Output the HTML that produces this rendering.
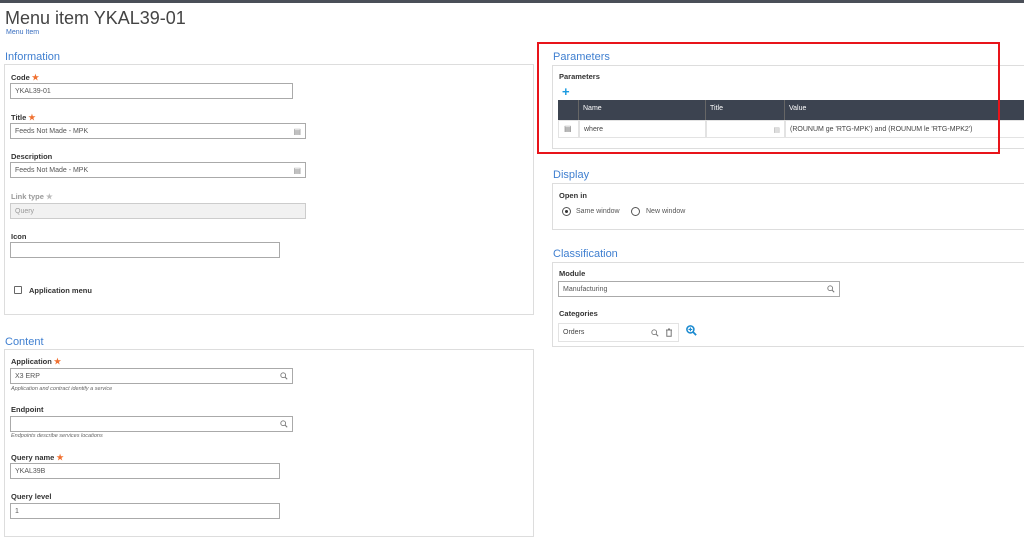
<!DOCTYPE html>
<html><head><meta charset="utf-8"><style>
*{margin:0;padding:0;box-sizing:border-box}
body{width:1024px;height:541px;background:#fff;position:relative;overflow:hidden;font-family:"Liberation Sans",sans-serif;color:#333}
.a{position:absolute}
.top{left:0;top:0;width:1024px;height:3px;background:#4a4f58}
.h1{left:5px;top:8px;font-size:18px;color:#444}
.sub{left:6px;top:29px;font-size:7px;color:#3a6fc0}
.sec{font-size:11px;color:#3f7fd0}
.box{border:1px solid #ddd;background:#fff}
.lbl{font-size:7.5px;font-weight:bold;color:#333}
.st{color:#f07030;font-size:8px}
.in{border:1px solid #aaa;height:16px;font-size:7px;color:#555;padding:4px 0 0 4px;background:#fff}
.ic{position:absolute;right:4px;top:3px;font-size:8px;color:#888}
.mg{position:absolute;right:4px;top:3px}
.hint{font-size:5.5px;font-style:italic;color:#666}
.th{background:#3c4350;color:#fff;font-size:7px;padding:5px 0 0 4px;height:20px;border-right:1px solid #666}
.td{border:1px solid #e3e3e3;height:18px;font-size:7px;color:#444;padding:5px 0 0 4px}
</style></head><body>
<svg width="0" height="0" style="position:absolute"><defs><symbol id="s" viewBox="0 0 10 10"><circle cx="4" cy="4" r="3" fill="none" stroke="#777" stroke-width="1.1"/><path d="M6.2 6.2L9 9" stroke="#777" stroke-width="1.3"/></symbol></defs></svg>
<div class="a top"></div>
<div class="a h1">Menu item YKAL39-01</div>
<div class="a sub">Menu Item</div>

<div class="a sec" style="left:5px;top:51px">Information</div>
<div class="a box" style="left:4px;top:64px;width:530px;height:251px"></div>
<div class="a lbl" style="left:11px;top:73px">Code <span class="st">★</span></div>
<div class="a in" style="left:10px;top:83px;width:283px">YKAL39-01</div>
<div class="a lbl" style="left:11px;top:113px">Title <span class="st">★</span></div>
<div class="a in" style="left:10px;top:123px;width:296px">Feeds Not Made - MPK<span class="ic">▤</span></div>
<div class="a lbl" style="left:11px;top:152px">Description</div>
<div class="a in" style="left:10px;top:162px;width:296px">Feeds Not Made - MPK<span class="ic">▤</span></div>
<div class="a lbl" style="left:11px;top:192px;color:#999">Link type <span style="color:#bbb">★</span></div>
<div class="a in" style="left:10px;top:203px;width:296px;background:#f1f1f1;border-color:#ccc;color:#999">Query</div>
<div class="a lbl" style="left:11px;top:232px">Icon</div>
<div class="a in" style="left:10px;top:242px;width:270px"></div>
<div class="a" style="left:14px;top:286px;width:8px;height:8px;border:1px solid #666;border-radius:1px"></div>
<div class="a lbl" style="left:29px;top:286px">Application menu</div>

<div class="a sec" style="left:5px;top:336px">Content</div>
<div class="a box" style="left:4px;top:349px;width:530px;height:188px"></div>
<div class="a lbl" style="left:11px;top:357px">Application <span class="st">★</span></div>
<div class="a in" style="left:10px;top:368px;width:283px">X3 ERP<svg class="mg" width="8" height="8"><use href="#s"/></svg></div>
<div class="a hint" style="left:11px;top:386px">Application and contract identify a service</div>
<div class="a lbl" style="left:11px;top:405px">Endpoint</div>
<div class="a in" style="left:10px;top:416px;width:283px"><svg class="mg" width="8" height="8"><use href="#s"/></svg></div>
<div class="a hint" style="left:11px;top:433px">Endpoints describe services locations</div>
<div class="a lbl" style="left:11px;top:453px">Query name <span class="st">★</span></div>
<div class="a in" style="left:10px;top:463px;width:270px">YKAL39B</div>
<div class="a lbl" style="left:11px;top:492px">Query level</div>
<div class="a in" style="left:10px;top:503px;width:270px">1</div>

<div class="a sec" style="left:553px;top:51px">Parameters</div>
<div class="a box" style="left:552px;top:65px;width:480px;height:84px"></div>
<div class="a lbl" style="left:559px;top:72px">Parameters</div>
<div class="a" style="left:562px;top:84px;font-size:13px;font-weight:bold;color:#1a9ae0">+</div>
<div class="a th" style="left:558px;top:100px;width:21px"></div>
<div class="a th" style="left:579px;top:100px;width:127px">Name</div>
<div class="a th" style="left:706px;top:100px;width:79px">Title</div>
<div class="a th" style="left:785px;top:100px;width:240px;border:none">Value</div>
<div class="a td" style="left:558px;top:120px;width:21px;color:#777;font-size:8px;padding:3px 0 0 5px">▤</div>
<div class="a td" style="left:579px;top:120px;width:127px">where</div>
<div class="a td" style="left:706px;top:120px;width:79px;text-align:right;padding-right:4px;color:#aaa">▤</div>
<div class="a td" style="left:785px;top:120px;width:240px">(ROUNUM ge 'RTG-MPK') and (ROUNUM le 'RTG-MPK2')</div>
<div class="a" style="left:537px;top:42px;width:463px;height:112px;border:2px solid #e8141a"></div>

<div class="a sec" style="left:553px;top:169px">Display</div>
<div class="a box" style="left:552px;top:183px;width:480px;height:47px"></div>
<div class="a lbl" style="left:559px;top:191px">Open in</div>
<div class="a" style="left:562px;top:207px;width:9px;height:9px;border:1px solid #555;border-radius:50%"><div style="margin:2px;width:3px;height:3px;background:#333;border-radius:50%"></div></div>
<div class="a" style="left:576px;top:208px;font-size:7px;color:#555">Same window</div>
<div class="a" style="left:631px;top:207px;width:9px;height:9px;border:1px solid #555;border-radius:50%"></div>
<div class="a" style="left:646px;top:208px;font-size:7px;color:#555">New window</div>

<div class="a sec" style="left:553px;top:248px">Classification</div>
<div class="a box" style="left:552px;top:262px;width:480px;height:85px"></div>
<div class="a lbl" style="left:559px;top:269px">Module</div>
<div class="a in" style="left:558px;top:281px;width:282px">Manufacturing<svg class="mg" width="8" height="8"><use href="#s"/></svg></div>
<div class="a lbl" style="left:559px;top:309px">Categories</div>
<div class="a" style="left:558px;top:323px;width:121px;height:19px;border:1px solid #e3e3e3;font-size:7px;color:#444;padding:5px 0 0 4px">Orders<svg style="position:absolute;left:92px;top:5px" width="8" height="8"><use href="#s"/></svg><svg style="position:absolute;left:106px;top:4px" width="8" height="9" viewBox="0 0 8 9"><path d="M1 2h6M3 1h2M1.8 2.5v5.8h4.4V2.5" fill="none" stroke="#777" stroke-width="1"/></svg></div>
<svg class="a" style="left:686px;top:325px" width="11" height="11" viewBox="0 0 10 10"><circle cx="4" cy="4" r="3.2" fill="none" stroke="#1a8ad0" stroke-width="1.4"/><path d="M4 2.3v3.4M2.3 4h3.4" stroke="#1a8ad0" stroke-width="1"/><path d="M6.3 6.3L9.2 9.2" stroke="#1a8ad0" stroke-width="1.6"/></svg>
</body></html>
